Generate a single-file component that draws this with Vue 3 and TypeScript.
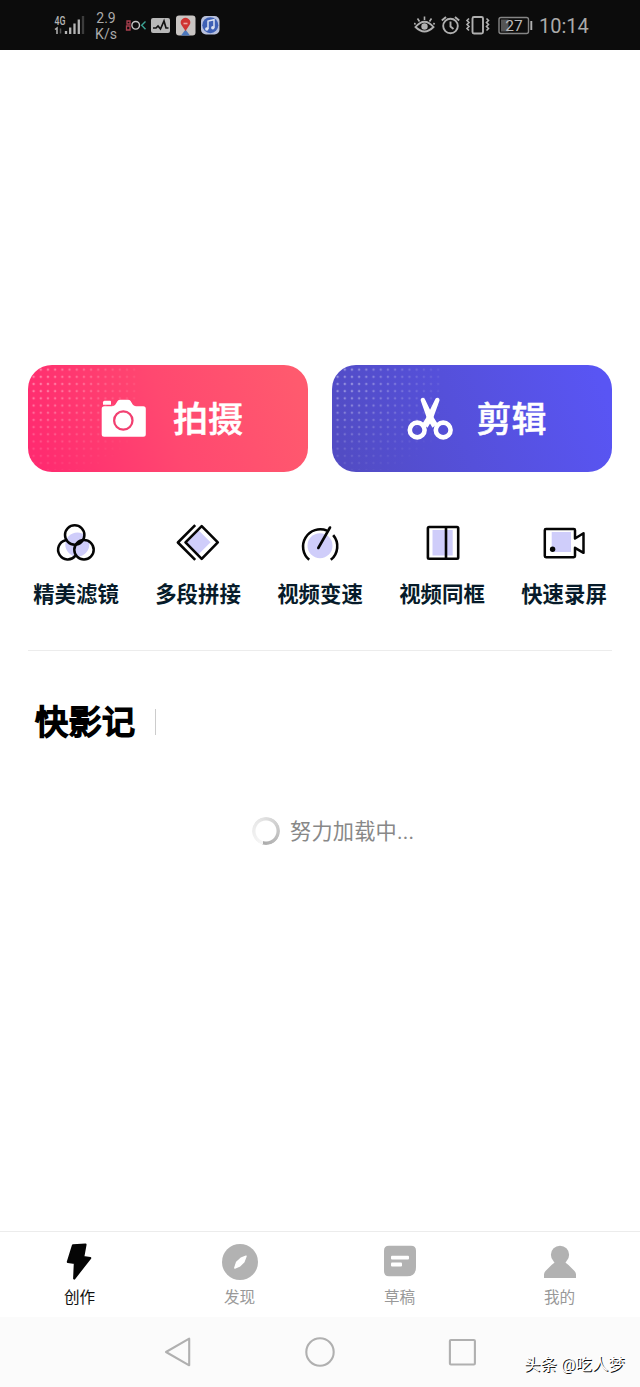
<script setup lang="ts">
interface Feature {
  id: string
  label: string
}

interface Tab extends Feature {
  active: boolean
}

const features: Feature[] = [
  { id: 'filter', label: '精美滤镜' },
  { id: 'splice', label: '多段拼接' },
  { id: 'speed', label: '视频变速' },
  { id: 'frame', label: '视频同框' },
  { id: 'record', label: '快速录屏' },
]

const tabs: Tab[] = [
  { id: 'create', label: '创作', active: true },
  { id: 'discover', label: '发现', active: false },
  { id: 'draft', label: '草稿', active: false },
  { id: 'mine', label: '我的', active: false },
]
</script>

<template>
  <div class="screen">
    <header class="status">
      <svg class="signal" width="32" height="24" viewBox="54 13 32 24">
        <text x="54.5" y="24.500" font-size="12" font-weight="500" textLength="11" lengthAdjust="spacingAndGlyphs" fill="#b4b4b4">4G</text>
        <path d="M55 29.500l2-1.500v6" fill="none" stroke="#b4b4b4" stroke-width="1.500" />
        <path d="M60.500 28.500v5" stroke="#555" stroke-width="1.500" />
        <path d="M66 31v3M70.200 27.500v6.500M74.500 23.500v10.500M78.800 19.500v14.500" stroke="#b4b4b4" stroke-width="2.300" />
        <path d="M83 16v18" stroke="#3c3c3c" stroke-width="2.300" />
      </svg>
      <div class="rate"><span>2.9</span><span>K/s</span></div>
      <svg class="notices" width="96" height="22" viewBox="125 15 96 22">
        <path d="M127 21h3v3h-3zM126.500 26h3.500v4h-3.500z" fill="none" stroke="#a83f4e" stroke-width="1.300" />
        <circle cx="135.700" cy="25.300" r="3.800" fill="none" stroke="#c5c5c5" stroke-width="1.400" />
        <path d="M145.500 21.500l-3.800 3.800 3.800 4" fill="none" stroke="#3ba394" stroke-width="1.400" />
        <rect x="151" y="18" width="19" height="15" rx="2" fill="#b8b8b8" />
        <path d="M153 28h3l2-2 2.500 3 3.500-8 2 7h2.500" fill="none" stroke="#111" stroke-width="1.700" />
        <rect x="176" y="15.500" width="19.500" height="20" rx="3" fill="#c9c5c3" />
        <path d="M181 35.500l4.500-6 4.500 6z" fill="#4c78bd" />
        <path d="M185.500 31l-4-6a4.700 4.700 0 1 1 8 0z" fill="#cf3432" />
        <path d="M183.500 23.500h4" stroke="#edaaa5" stroke-width="1.600" />
        <rect x="201" y="16" width="18.500" height="18.500" rx="5" fill="#b9c1dc" />
        <circle cx="210.300" cy="25.200" r="8" fill="#3e60b5" />
        <path d="M208 29v-8l6-1.300v8" fill="none" stroke="#dce2f1" stroke-width="1.500" />
        <circle cx="206.800" cy="29" r="1.700" fill="#dce2f1" />
        <circle cx="212.800" cy="27.800" r="1.700" fill="#dce2f1" />
      </svg>
      <svg class="system" width="120" height="24" viewBox="414 13 120 24" fill="none" stroke="#b0b0b0" stroke-width="1.900">
        <path d="M415.500 27q9-10.500 18 0-9 9-18 0z" />
        <circle cx="424.500" cy="26.500" r="3.200" fill="#b0b0b0" stroke="none" />
        <path d="M424.500 20v-3.500M419.500 21.500l-2-3M429.500 21.500l2-3M415.500 24.500l-1.200-1.500M433.500 24.500l1-1.500" stroke-width="1.600" />
        <circle cx="450.500" cy="26" r="7.300" />
        <path d="M450.500 21.500v5l3 2.500M441.800 20.500l4.200-3.500M459.200 20.500l-4.200-3.500" />
        <rect x="472.500" y="17" width="10.500" height="16.500" rx="1.500" />
        <path d="M469 18.500l-2 2 2 2-2 2 2 2-2 2 2 2M486.500 18.500l2 2-2 2 2 2-2 2 2 2-2 2" stroke-width="1.600" />
        <rect x="499" y="17.500" width="29.500" height="16" rx="2" stroke="#858585" stroke-width="1.400" />
        <rect x="501" y="19.500" width="7.500" height="12" fill="#555" stroke="none" />
        <path d="M531.300 21v9" />
        <text x="514" y="31" font-size="15.500" text-anchor="middle" fill="#bcbcbc" stroke="none">27</text>
      </svg>
      <span class="clock">10:14</span>
    </header>

    <main>
      <section class="actions">
        <button class="action shoot" type="button">
          <svg width="46" height="42" viewBox="101 397 46 42">
            <path d="M104.500 399.700h5.500q1 0 1 1v3h-8v-2.500q0-1.500 1.500-1.500z" fill="#fff" />
            <path d="M104.200 405.200H112q2.300 0 3.400-1.800l2.200-3.300q1-1.400 2.600-1.400h7.800q1.700 0 2.600 1.400l2.100 3.300q1.200 1.800 3.300 1.800h7.300q2.500 0 2.500 2.500v25.500q0 2.500-2.500 2.500h-39.100q-2.500 0-2.500-2.500v-25.500q0-2.500 2.500-2.500z" fill="#fff" />
            <circle cx="123.300" cy="419.500" r="9.200" fill="none" stroke="#f23f70" stroke-width="2.300" />
          </svg>
          <span>拍摄</span>
        </button>
        <button class="action edit" type="button">
          <svg width="48" height="46" viewBox="406 396 48 46">
            <g fill="none" stroke="#fff" stroke-width="4.600">
              <circle cx="417.200" cy="430" r="7.400" />
              <circle cx="443.200" cy="430" r="7.400" />
            </g>
            <path d="M420.700 400.500q-.2-2.700 2.300-2.700 1.600 0 2.100 1.700L434 418l3.500 5.500-5 4.300-5.500-9.300z" fill="#fff" />
            <path d="M439.500 400.500q.2-2.700-2.300-2.700-1.600 0-2.100 1.700L426 418l-3.500 5.500 5 4.300 5.500-9.300z" fill="#fff" />
          </svg>
          <span>剪辑</span>
        </button>
      </section>

      <section class="features">
        <div v-for="item in features" :key="item.id" class="feature">
          <svg v-if="item.id === 'filter'" width="44" height="40" viewBox="54 523 44 40">
            <defs>
              <clipPath id="petals">
                <circle cx="74.700" cy="535" r="9.700" />
                <circle cx="67.700" cy="549.700" r="9.700" />
                <circle cx="84" cy="549.700" r="9.700" />
              </clipPath>
            </defs>
            <circle cx="77.300" cy="544.500" r="12" fill="#cfcdfa" clip-path="url(#petals)" />
            <g fill="none" stroke="#050505" stroke-width="2.500" stroke-linecap="round">
              <path d="M65.500 540.300a9.700 9.700 0 1 0 9.800 15.600" />
              <circle cx="74.700" cy="535" r="9.700" />
              <circle cx="84" cy="549.700" r="9.700" />
            </g>
          </svg>
          <svg v-else-if="item.id === 'splice'" width="44" height="40" viewBox="176 523 44 40">
            <path d="M198.300 530l12.300 12.300-12.300 12.300L187 542.300z" fill="#cfcdfa" />
            <g fill="none" stroke="#050505" stroke-width="2.600" stroke-linejoin="round">
              <path d="M195.200 525.200l-17.300 17.300 17.300 17.300" />
              <path d="M201.700 526.200l16.100 16.100-16.100 16.600-16.200-16.600z" />
            </g>
          </svg>
          <svg v-else-if="item.id === 'speed'" width="44" height="40" viewBox="298 523 44 40">
            <circle cx="320" cy="545.700" r="12.500" fill="#cfcdfa" />
            <g fill="none" stroke="#050505" stroke-width="2.600">
              <path d="M309.200 559.800A17.300 17.300 0 0 1 327 530.600M333.200 535.200A17.300 17.300 0 0 1 330.800 559.800" />
              <path d="M330 527.500l-11.700 20.500" stroke-linecap="round" />
            </g>
          </svg>
          <svg v-else-if="item.id === 'frame'" width="44" height="40" viewBox="420 523 44 40">
            <path d="M432.500 530h20.200v25.500h-20.200z" fill="#cfcdfa" />
            <rect x="427.900" y="527" width="30.300" height="31.800" rx="1.200" fill="none" stroke="#050505" stroke-width="2.600" />
            <path d="M446 527v32" stroke="#050505" stroke-width="2.600" />
          </svg>
          <svg v-else width="44" height="40" viewBox="542 523 44 40">
            <path d="M551.700 532H571v20h-19.300z" fill="#cfcdfa" />
            <circle cx="552.600" cy="549.200" r="2.700" fill="#050505" />
            <path d="M575 538.500v-8.300q0-1.200-1.200-1.200H546q-1.200 0-1.200 1.200V556q0 1.200 1.200 1.200h27.800q1.200 0 1.200-1.200v-8.200l8.500 5v-19.500l-8.500 5.200z" fill="none" stroke="#050505" stroke-width="2.500" stroke-linejoin="round" />
          </svg>
          <span>{{ item.label }}</span>
        </div>
      </section>

      <section class="journal">
        <h2>快影记</h2>
        <i class="bar"></i>
      </section>

      <div class="loading">
        <i class="spinner"></i>
        <span>努力加载中...</span>
      </div>
    </main>

    <nav class="tabs">
      <div v-for="tab in tabs" :key="tab.id" class="tab" :class="{ active: tab.active }">
        <svg v-if="tab.id === 'create'" width="40" height="40" viewBox="60 1242 40 40">
          <path d="M73 1245.300l12.500-.8-2.300 12.500 7 1-16 20.500.7-15.500-7-1.200z" fill="#050505" stroke="#050505" stroke-width="2.200" stroke-linejoin="round" />
        </svg>
        <svg v-else-if="tab.id === 'discover'" width="40" height="40" viewBox="220 1242 40 40">
          <circle cx="240" cy="1262" r="18" fill="#b2b2b2" />
          <path d="M246 1256.300l-5 1.900-4.400 4.200-1.800 5.600 4.600-1.900 4.600-4.500z" fill="#fff" stroke="#fff" stroke-width="1.500" stroke-linejoin="round" />
        </svg>
        <svg v-else-if="tab.id === 'draft'" width="40" height="40" viewBox="380 1242 40 40">
          <path d="M389 1245.700h22q5 0 5 5V1267q0 9.300-9 9.300h-18q-5 0-5-5v-20.600q0-5 5-5z" fill="#b2b2b2" />
          <rect x="391" y="1255.700" width="18" height="3.900" rx="1" fill="#fff" />
          <rect x="391" y="1262.600" width="11" height="3.900" rx="1" fill="#fff" />
        </svg>
        <svg v-else width="40" height="40" viewBox="540 1242 40 40">
          <circle cx="560" cy="1254.800" r="9.100" fill="#b2b2b2" />
          <path d="M555 1261h10q.3 2.300 3.500 4l6 6q1.500 1.600 1.500 3.500v3.500h-32v-3.500q0-1.900 1.500-3.500l6-6q3.200-1.700 3.500-4z" fill="#b2b2b2" />
        </svg>
        <span>{{ tab.label }}</span>
      </div>
    </nav>

    <footer class="system-nav">
      <svg width="320" height="36" viewBox="160 1334 320 36" fill="none" stroke="#b0b0b0" stroke-width="2.100" stroke-linejoin="round">
        <path d="M166 1352l23.200-13.300v26.600z" />
        <circle cx="320" cy="1352" r="13.700" />
        <rect x="449.900" y="1340" width="25" height="24.500" rx="1" />
      </svg>
      <span class="watermark">头条 @吃人梦</span>
    </footer>
  </div>
</template>

<style>
body {
  margin: 0;
  background: #fff;
}
</style>

<style scoped>
.screen {
  display: flex;
  flex-direction: column;
  width: 640px;
  height: 1387px;
  background: #fff;
  font-family: Roboto, "Noto Sans CJK SC", sans-serif;
}
svg {
  display: block;
  flex: none;
}
.status {
  display: flex;
  align-items: center;
  box-sizing: border-box;
  height: 50px;
  padding-left: 54px;
  background: #0c0c0c;
  color: #aaa;
}
.rate {
  display: flex;
  flex-direction: column;
  width: 22px;
  margin: 2px 8px 0 9px;
  font-size: 14px;
  line-height: 16px;
  text-align: center;
}
.notices {
  margin-top: 2px;
}
.system {
  margin-left: 193px;
}
.clock {
  margin: 2px 0 0 5px;
  font-size: 20px;
}
main {
  flex: 1;
  padding-top: 315px;
}
.actions {
  display: flex;
  gap: 24px;
  padding: 0 28px;
}
.action {
  position: relative;
  display: flex;
  align-items: center;
  flex: 1;
  height: 107px;
  padding: 0 0 0 73px;
  overflow: hidden;
  border: 0;
  border-radius: 24px;
  color: #fff;
  font: 500 35px/50px "Noto Sans CJK SC", sans-serif;
}
.action::before {
  content: "";
  position: absolute;
  inset: 1px auto auto 2px;
  width: 110px;
  height: 104px;
  background: radial-gradient(circle, #ffffff60 0.8px, transparent 1.6px) 0 0 / 7.2px 7.2px;
  mask-image: radial-gradient(ellipse at 0 15%, #000 10%, transparent 82%);
}
.action span {
  margin: -3px 0 0 26px;
  -webkit-text-stroke: 0.5px #fff;
}
.shoot {
  background: linear-gradient(70deg, #ff2b70 5%, #ff4870 50%, #ff5a6e 95%);
}
.edit {
  padding-left: 74px;
  background: linear-gradient(70deg, #524cc4 5%, #5550da 45%, #5955f4 95%);
}
.edit span {
  margin-left: 23px;
}
.features {
  display: flex;
  margin: 0 15px;
  padding-top: 51px;
}
.feature {
  display: flex;
  flex: 1;
  flex-direction: column;
  align-items: center;
  color: #071b2a;
  font-size: 21.4px;
  font-weight: 700;
  line-height: 30px;
}
.feature span {
  margin-top: 17px;
}
.journal {
  display: flex;
  align-items: center;
  margin: 40px 28px 0;
  padding: 54px 0 0 7px;
  border-top: 1px solid #ececec;
}
h2 {
  margin: 0;
  color: #000;
  font-size: 33px;
  font-weight: 400;
  line-height: 36px;
  letter-spacing: 0.5px;
  -webkit-text-stroke: 2px #000;
}
.bar {
  width: 1.5px;
  height: 26px;
  margin: -2px 0 0 19px;
  background: #ccc;
}
.loading {
  display: flex;
  align-items: center;
  margin: 73px 0 0 251.5px;
  color: #888;
  font-size: 21.2px;
  line-height: 30px;
}
.loading span {
  margin-top: 3px;
  letter-spacing: 0.2px;
}
.spinner {
  width: 28px;
  height: 28px;
  margin-right: 10.5px;
  border-radius: 50%;
  background: conic-gradient(from 195deg, #f6f6f6, #e8e8e8 35%, #ccc 65%, #aaa);
  mask-image: radial-gradient(circle, transparent 10px, #000 11px);
}
.tabs {
  display: flex;
  box-sizing: border-box;
  height: 86px;
  padding-top: 10px;
  border-top: 1px solid #ececec;
}
.tab {
  display: flex;
  flex: 1;
  flex-direction: column;
  align-items: center;
  color: #999;
  font-size: 15.6px;
  line-height: 24px;
}
.tab span {
  margin: 4px 1px 0 0;
}
.active {
  color: #111;
}
.system-nav {
  display: flex;
  align-items: flex-start;
  box-sizing: border-box;
  height: 70px;
  padding: 17px 0 0 160px;
  background: #fbfbfb;
}
.watermark {
  margin: 19px 0 0 44px;
  color: #fff;
  font-size: 16.4px;
  line-height: 24px;
  white-space: nowrap;
  text-shadow: 1px 1px 0 #111;
}
</style>
